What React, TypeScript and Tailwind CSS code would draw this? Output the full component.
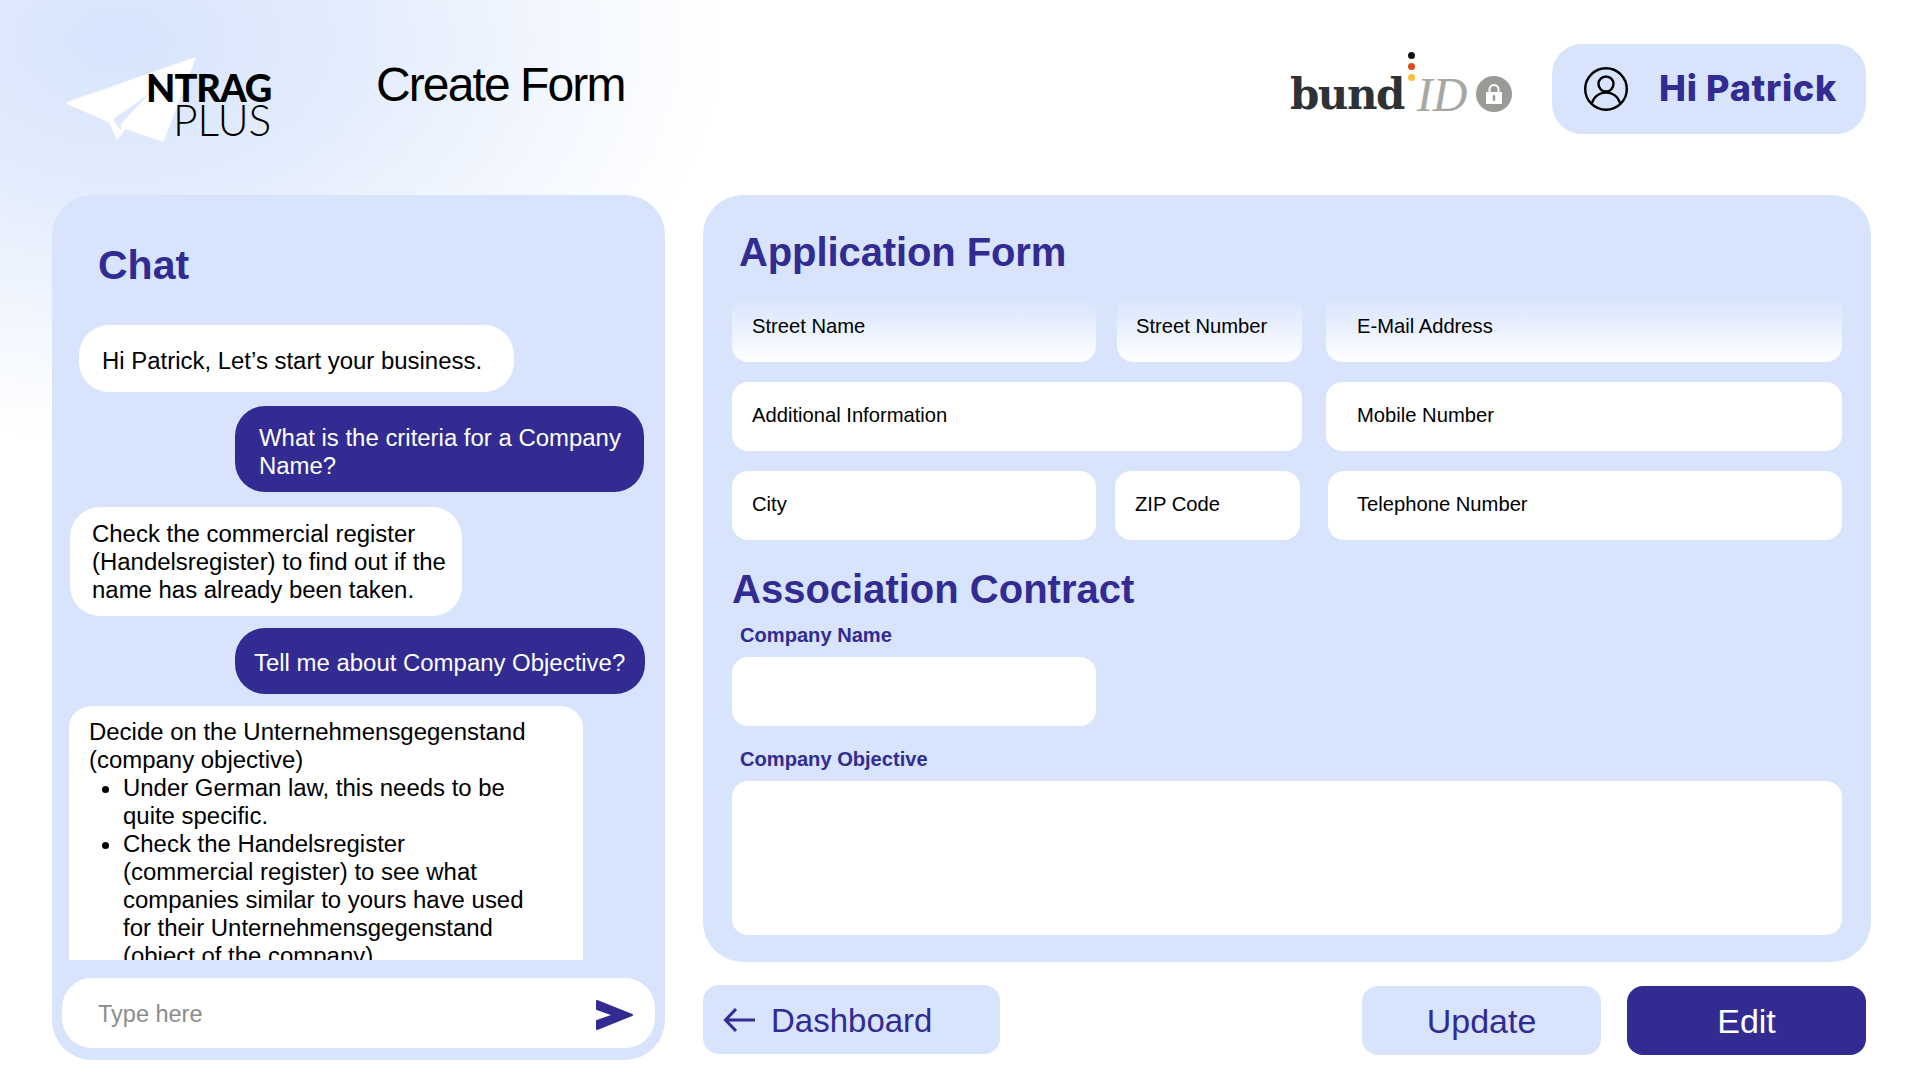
import React from 'react';

const NAVY = 'text-[#312b92]';

const Field: React.FC<{ label?: string; className?: string; fade?: boolean }> = ({ label, className = '', fade }) => {
  return (
    <div className={`rounded-[16px] pl-5 text-[20.2px] leading-[24px] text-black ${fade ? 'h-[65px] bg-gradient-to-b from-[#d7e4fc] to-white pt-[17px]' : 'h-[69px] bg-white pt-[21px]'} ${className}`}>
      {label}
    </div>
  );
};

const Bubble: React.FC<{ mine?: boolean; className?: string; children: React.ReactNode }> = ({ mine, className = '', children }) => {
  return (
    <div className={`shrink-0 text-[23.95px] leading-[28px] ${mine ? 'bg-[#312b92] text-white' : 'bg-white text-black'} ${className}`}>
      {children}
    </div>
  );
};

const Logo = () => (
  <div className="relative h-[90px] w-[216px]">
    <svg width="130" height="90" viewBox="0 0 130 90" className="absolute left-0 top-0">
      <path d="M1 47 L129 2 L97 85 L59 72 L51 83 L44 66 Z" fill="#ffffff" stroke="#ffffff" strokeWidth="1.5" strokeLinejoin="round" />
      <path d="M47 63 L84 37 L55 68 L55 75 Z" fill="#dfe9fd" />
    </svg>
    <div className="absolute left-[80px] top-[16px] font-['Lato'] text-[38px] font-black leading-[30px] tracking-[-1px] text-black">NTRAG</div>
    <div className="absolute left-[107px] top-[49px] font-['Lato'] text-[42.5px] font-light leading-[30px] text-black">PLUS</div>
  </div>
);

const BundId = () => (
  <div className="relative flex h-[70px] w-[226px] items-end pl-[4px]">
    <span className="font-['DejaVu_Serif'] text-[42px] font-bold leading-[52px] tracking-[-1.5px] text-[#2d3236]">bund</span>
    <span className="ml-[13px] font-['Liberation_Serif'] text-[48px] italic leading-[52px] text-[#a7a7a4]">ID</span>
    <div className="mb-[9px] ml-[9px] flex h-[36px] w-[36px] shrink-0 items-center justify-center rounded-full bg-[#9a9a96]">
      <svg width="18" height="22" viewBox="0 0 18 22">
        <path d="M4.5 10V6.5a4.5 4.5 0 0 1 9 0V10" fill="none" stroke="#fff" strokeWidth="2" />
        <rect x="1" y="9" width="16" height="12" fill="#fff" />
        <rect x="7.8" y="12" width="2.4" height="6" rx="1.2" fill="#9a9a96" />
      </svg>
    </div>
    <div className="absolute left-[122px] top-[1px] flex flex-col gap-[4px]">
      <span className="h-[7px] w-[7px] rounded-full bg-[#111]" />
      <span className="h-[7px] w-[7px] rounded-full bg-[#dc4a14]" />
      <span className="h-[7px] w-[7px] rounded-full bg-[#fbbf3a]" />
    </div>
  </div>
);

export default function App() {
  return (
    <div className="h-[1080px] w-[1920px] overflow-hidden bg-white bg-[radial-gradient(ellipse_600px_400px_at_120px_40px,#d7e4fc_0%,#e4edfd_40%,#ffffff_100%)] font-['Liberation_Sans',sans-serif]">
      <header className="flex h-[195px] items-start pl-[66px] pr-[54px]">
        <div className="mt-[56px]"><Logo /></div>
        <h1 className="ml-[94px] mt-[56px] text-[48px] leading-[58px] tracking-[-1.9px] text-black">Create Form</h1>
        <div className="ml-auto mt-[51px]"><BundId /></div>
        <div className="ml-[40px] mt-[44px] flex h-[90px] w-[314px] items-center rounded-[30px] bg-[#d7e4fc] pl-[32px]">
          <svg width="44" height="44" viewBox="0 0 44 44" fill="none" stroke="#000" strokeWidth="2.4">
            <circle cx="22" cy="22" r="20.8" />
            <circle cx="22" cy="17" r="7.5" />
            <path d="M8 36c2-7 8-10.5 14-10.5S34 29 36 36" />
          </svg>
          <span className={`ml-[31px] -translate-y-[1px] font-['Inter'] text-[36px] font-extrabold leading-[44px] tracking-[0.7px] ${NAVY}`}>Hi Patrick</span>
        </div>
      </header>

      <main className="flex items-start pl-[52px]">
        <section className="flex h-[865px] w-[613px] flex-col rounded-[40px] bg-[#d7e4fc]">
          <h2 className={`ml-[46px] mt-[47px] h-[48px] text-[41px] font-bold leading-[46px] ${NAVY}`}>Chat</h2>
          <Bubble className="ml-[27px] mt-[35px] h-[67px] w-[435px] rounded-[30px] pl-[23px] pt-[22px]">Hi Patrick, Let’s start your business.</Bubble>
          <Bubble mine className="ml-[183px] mt-[14px] h-[86px] w-[409px] rounded-[30px] pl-[24px] pt-[18px] pr-[10px]">What is the criteria for a Company Name?</Bubble>
          <Bubble className="ml-[18px] mt-[15px] h-[109px] w-[392px] rounded-[30px] pl-[22px] pt-[13px] pr-[10px]">Check the commercial register (Handelsregister) to find out if the name has already been taken.</Bubble>
          <Bubble mine className="ml-[183px] mt-[12px] h-[66px] w-[410px] rounded-[30px] pl-[19px] pt-[21px]">Tell me about Company Objective?</Bubble>
          <Bubble className="ml-[17px] mt-[12px] h-[254px] w-[514px] overflow-hidden rounded-t-[22px] pl-[20px] pr-[50px] pt-[12px]">
            Decide on the Unternehmensgegenstand (company objective)
            <ul className="list-disc pl-[34px]">
              <li>Under German law, this needs to be quite specific.</li>
              <li>Check the Handelsregister (commercial register) to see what companies similar to yours have used for their Unternehmensgegenstand (object of the company)</li>
            </ul>
          </Bubble>
          <div className="ml-[10px] mt-[18px] flex h-[70px] w-[593px] items-center justify-between rounded-[30px] bg-white pl-[36px] pr-[22px]">
            <span className="translate-y-[2px] text-[23.5px] text-[#8c8c8c]">Type here</span>
            <svg width="37" height="32" viewBox="0 0 37 32" className="translate-y-[2px]"><path d="M1 2 L36 16 L1 30 L1 22 L18 16 L1 10 Z" fill="#312b92" stroke="#312b92" strokeWidth="2" strokeLinejoin="round" /></svg>
          </div>
        </section>

        <div className="ml-[38px] w-[1168px]">
          <section className="h-[767px] rounded-[40px] bg-[#d7e4fc] pl-[29px] pr-[29px]">
            <h2 className={`ml-[7px] pt-[34px] text-[40px] font-bold leading-[46px] tracking-[-0.1px] ${NAVY}`}>Application Form</h2>
            <div className="mt-[22px] flex">
              <Field fade label="Street Name" className="w-[364px]" />
              <Field fade label="Street Number" className="ml-[21px] w-[185px] !pl-[19px]" />
              <Field fade label="E-Mail Address" className="ml-[24px] flex-1 !pl-[31px]" />
            </div>
            <div className="mt-[20px] flex">
              <Field label="Additional Information" className="w-[570px]" />
              <Field label="Mobile Number" className="ml-[24px] flex-1 !pl-[31px]" />
            </div>
            <div className="mt-[20px] flex">
              <Field label="City" className="w-[364px]" />
              <Field label="ZIP Code" className="ml-[19px] w-[185px]" />
              <Field label="Telephone Number" className="ml-[28px] flex-1 !pl-[29px]" />
            </div>
            <h2 className={`mt-[26px] text-[40px] font-bold leading-[46px] ${NAVY}`}>Association Contract</h2>
            <div className={`ml-[8px] mt-[11px] text-[20.1px] font-bold leading-[24px] ${NAVY}`}>Company Name</div>
            <div className="mt-[10px] h-[69px] w-[364px] rounded-[16px] bg-white" />
            <div className={`ml-[8px] mt-[21px] text-[20.1px] font-bold leading-[24px] ${NAVY}`}>Company Objective</div>
            <div className="mt-[10px] h-[154px] rounded-[16px] bg-white" />
          </section>
          <div className="mt-[23px] flex items-start">
            <div className={`flex h-[69px] w-[297px] items-center rounded-[16px] bg-[#d7e4fc] pl-[20px] ${NAVY}`}>
              <svg width="32" height="26" viewBox="0 0 32 26" fill="none" stroke="#312b92" strokeWidth="3">
                <path d="M32 13H3" />
                <path d="M13 2 L2.5 13 L13 24" />
              </svg>
              <span className="ml-[16px] translate-y-[1px] text-[33px]">Dashboard</span>
            </div>
            <div className={`ml-auto mt-[1px] flex h-[69px] w-[239px] items-center justify-center rounded-[16px] bg-[#d7e4fc] pt-[2px] text-[34px] ${NAVY}`}>Update</div>
            <div className="ml-[26px] mr-[5px] mt-[1px] flex h-[69px] w-[239px] items-center justify-center rounded-[16px] bg-[#312b92] pt-[2px] text-[34px] text-white">Edit</div>
          </div>
        </div>
      </main>
    </div>
  );
}
